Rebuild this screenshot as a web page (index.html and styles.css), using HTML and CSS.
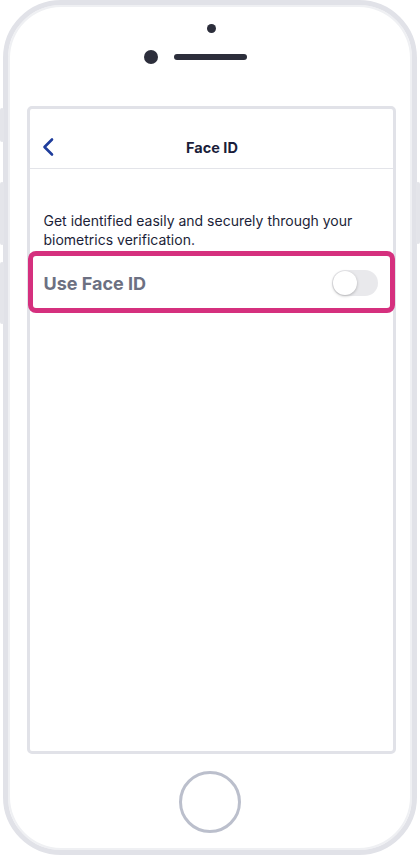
FILE: index.html
```html
<!DOCTYPE html>
<html>
<head>
<meta charset="utf-8">
<link rel="stylesheet" href="styles.css">
</head>
<body>
<div class="device">
  <span class="side-btn btn-l1"></span>
  <span class="side-btn btn-l2"></span>
  <span class="side-btn btn-l3"></span>
  <span class="side-btn btn-r1"></span>
  <div class="phone">
    <div class="top">
      <span class="sensor"></span>
      <div class="speaker-row">
        <span class="camera"></span>
        <span class="speaker"></span>
      </div>
    </div>
    <div class="screen">
      <div class="header">
        <svg class="back" width="14" height="20" viewBox="0 0 14 20"><path d="M11 2.5 L3.5 10 L11 17.5" fill="none" stroke="#1f3d9c" stroke-width="2.6" stroke-linecap="round" stroke-linejoin="round"/></svg>
        <div class="title">Face ID</div>
      </div>
      <p class="desc">Get identified easily and securely through your biometrics verification.</p>
      <div class="row">
        <span class="row-label">Use Face ID</span>
        <span class="toggle"><span class="knob"></span></span>
      </div>
    </div>
    <div class="bottom">
      <span class="home"></span>
    </div>
  </div>
</div>
</body>
</html>
```
FILE: styles.css
```css
html, body {
  margin: 0;
  padding: 0;
  background: #fff;
}
body {
  font-family: "Inter", "Roboto", "Liberation Sans", sans-serif;
}
.device {
  position: relative;
  width: 420px;
  height: 856px;
}
.phone {
  margin-left: 3px;
  width: 414px;
  height: 855px;
  box-sizing: border-box;
  border: 5px solid #e1e2e8;
  border-radius: 58px;
  box-shadow: inset 0 0 0 2px #eff0f3;
  display: flex;
  flex-direction: column;
  align-items: center;
  background: #fff;
}
.side-btn {
  position: absolute;
  width: 4px;
  background: #e4e5ea;
  border-radius: 2px;
}
.btn-l1 { left: 0; top: 108px; height: 34px; }
.btn-l2 { left: 0; top: 182px; height: 63px; }
.btn-l3 { left: 0; top: 262px; height: 62px; }
.btn-r1 { right: 0; top: 182px; height: 62px; }

.top {
  height: 101px;
  width: 100%;
  display: flex;
  flex-direction: column;
  align-items: center;
}
.sensor {
  width: 9px;
  height: 9px;
  border-radius: 50%;
  background: #2c2e3b;
  margin-top: 19px;
  margin-left: 2px;
}
.speaker-row {
  display: flex;
  align-items: center;
  margin-top: 17px;
  gap: 16px;
  margin-left: -30px;
}
.camera {
  width: 14px;
  height: 14px;
  border-radius: 50%;
  background: #2c2e3b;
}
.speaker {
  width: 73px;
  height: 6px;
  border-radius: 3px;
  background: #2c2e3b;
}
.screen {
  width: 369px;
  height: 648px;
  box-sizing: border-box;
  border: 3px solid #e1e2e8;
  border-radius: 5px;
  margin-left: 2px;
  display: flex;
  flex-direction: column;
}
.header {
  position: relative;
  height: 59px;
  border-bottom: 1px solid #e3e4e9;
  display: flex;
  align-items: flex-start;
  justify-content: center;
  flex-shrink: 0;
}
.back {
  position: absolute;
  left: 11px;
  top: 28px;
}
.title {
  font-size: 14.5px;
  font-weight: 700;
  color: #1a1d3a;
  margin-top: 30px;
  margin-left: 2px;
}
.desc {
  margin: 42px 0 0 0;
  padding: 0 14px 0 14px;
  font-size: 14px;
  line-height: 19px;
  color: #1b1e38;
}
.row {
  margin: 2px -2px 0 -2px;
  height: 62px;
  box-sizing: border-box;
  border: 5px solid #d5307e;
  border-radius: 8px;
  display: flex;
  align-items: center;
  justify-content: space-between;
  padding: 0 12px 0 11px;
}
.row-label {
  font-size: 18px;
  font-weight: 700;
  color: #6c7082;
  margin-top: 2px;
}
.toggle {
  position: relative;
  width: 46px;
  height: 26px;
  border-radius: 13px;
  background: #e9e9ec;
  margin-top: 1px;
}
.knob {
  position: absolute;
  left: 0;
  top: 0;
  width: 24px;
  height: 24px;
  margin: 1px;
  border-radius: 50%;
  background: #fff;
  box-shadow: 0 1px 3px rgba(0,0,0,0.25);
}
.bottom {
  flex: 1;
  width: 100%;
  display: flex;
  align-items: center;
  justify-content: center;
}
.home {
  width: 62px;
  height: 62px;
  box-sizing: border-box;
  border: 3px solid #bbbfcc;
  border-radius: 50%;
  margin-top: 0;
}
```
